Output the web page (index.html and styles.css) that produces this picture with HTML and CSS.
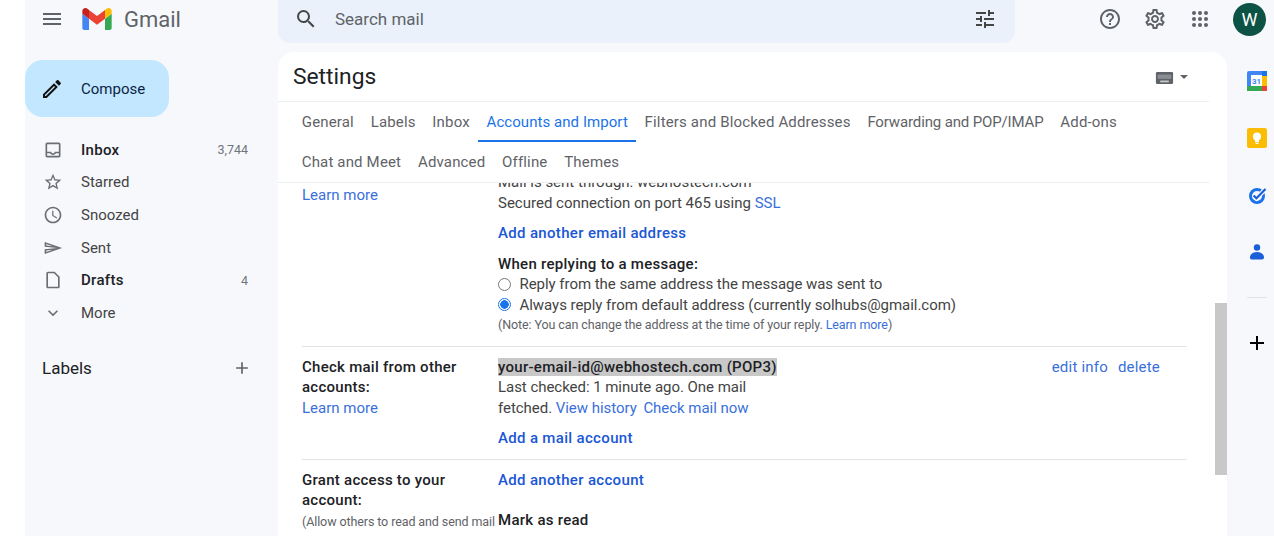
FILE: index.html
```html
<!DOCTYPE html>
<html lang="en">
<head>
  <meta charset="UTF-8" />
  <title>Settings - Gmail</title>
  <link rel="stylesheet" href="styles.css">
</head>
<body>

  <div class="app">
    <div class="gutter"></div>

    <!-- left column -->
    <aside class="sidebar">
      <div class="brand">
        <svg class="icon menu-icon" viewBox="0 0 24 24"><path d="M3 18h18v-2H3v2zm0-5h18v-2H3v2zm0-7v2h18V6H3z"/></svg>
        <svg class="logo" viewBox="52 42 88 66">
          <path fill="#4285f4" d="M58 108h14V74L52 59v43c0 3.32 2.69 6 6 6"/>
          <path fill="#34a853" d="M120 108h14c3.32 0 6-2.69 6-6V59l-20 15"/>
          <path fill="#fbbc04" d="M120 48v26l20-15v-8c0-7.42-8.47-11.65-14.4-7.2"/>
          <path fill="#ea4335" d="M72 74V48l24 18 24-18v26L96 92"/>
          <path fill="#c5221f" d="M52 51v8l20 15V48l-5.6-4.2c-5.94-4.45-14.4-.22-14.4 7.2"/>
        </svg>
        <span class="brand-name">Gmail</span>
      </div>

      <button class="compose">
        <svg class="icon" viewBox="0 0 24 24"><path d="M14.06 9.02l.92.92L5.92 19H5v-.92l9.06-9.06M17.66 3c-.25 0-.51.1-.7.29l-1.83 1.83 3.75 3.75 1.83-1.83c.39-.39.39-1.02 0-1.41l-2.34-2.34c-.2-.2-.45-.29-.71-.29zm-3.6 3.19L3 17.25V21h3.75L17.81 9.94l-3.75-3.75z"/></svg>
        <span>Compose</span>
      </button>

      <nav class="nav">
        <a class="nav-item bold">
          <svg class="icon" viewBox="0 0 24 24"><path d="M19 3H5c-1.1 0-2 .9-2 2v14c0 1.1.9 2 2 2h14c1.1 0 2-.9 2-2V5c0-1.1-.9-2-2-2zm0 16H5v-3h3.56c.69 1.19 1.97 2 3.45 2s2.75-.81 3.45-2H19v3zm0-5h-4.99c0 1.1-.9 2-2 2s-2-.9-2-2H5V5h14v9z"/></svg>
          <span class="nav-label">Inbox</span><span class="count">3,744</span>
        </a>
        <a class="nav-item">
          <svg class="icon" viewBox="0 0 24 24"><path d="M22 9.24l-7.19-.62L12 2 9.19 8.63 2 9.24l5.46 4.73L5.82 21 12 17.27 18.18 21l-1.63-7.03L22 9.24zM12 15.4l-3.76 2.27 1-4.28-3.32-2.88 4.38-.38L12 6.1l1.71 4.04 4.38.38-3.32 2.88 1 4.28L12 15.4z"/></svg>
          <span class="nav-label">Starred</span>
        </a>
        <a class="nav-item">
          <svg class="icon" viewBox="0 0 24 24"><path d="M11.99 2C6.47 2 2 6.48 2 12s4.47 10 9.99 10C17.52 22 22 17.52 22 12S17.52 2 11.99 2zM12 20c-4.42 0-8-3.58-8-8s3.58-8 8-8 8 3.58 8 8-3.58 8-8 8zm.5-13H11v6l5.25 3.15.75-1.23-4.5-2.67z"/></svg>
          <span class="nav-label">Snoozed</span>
        </a>
        <a class="nav-item">
          <svg class="icon" viewBox="0 0 24 24"><path transform="translate(0 2.4) scale(1 .8)" d="M4.01 6.03l7.51 3.22-7.52-1 .01-2.22m7.5 8.72L4 17.97v-2.22l7.51-1M2.01 3L2 10l15 2-15 2 .01 7L23 12 2.01 3z"/></svg>
          <span class="nav-label">Sent</span>
        </a>
        <a class="nav-item bold">
          <svg class="icon" viewBox="0 0 24 24"><path d="M6 2c-1.1 0-2 .9-2 2v16c0 1.1.9 2 2 2h12c1.1 0 2-.9 2-2V8l-6-6H6zm0 18V4h7.17L18 8.83V20H6z"/></svg>
          <span class="nav-label">Drafts</span><span class="count">4</span>
        </a>
        <a class="nav-item">
          <svg class="icon" viewBox="0 0 24 24"><path d="M16.59 8.59L12 13.17 7.41 8.59 6 10l6 6 6-6z"/></svg>
          <span class="nav-label">More</span>
        </a>
      </nav>

      <div class="labels-head">
        <span>Labels</span>
        <svg class="icon" viewBox="0 0 24 24"><path d="M19 13h-6v6h-2v-6H5v-2h6V5h2v6h6v2z"/></svg>
      </div>
    </aside>

    <!-- middle column -->
    <div class="center">
      <div class="search">
        <svg class="icon" viewBox="0 0 24 24"><path d="M15.5 14h-.79l-.28-.27A6.471 6.471 0 0 0 16 9.5 6.5 6.5 0 1 0 9.5 16c1.61 0 3.09-.59 4.23-1.57l.27.28v.79l5 4.99L20.49 19l-4.99-5zm-6 0C7.01 14 5 11.99 5 9.5S7.01 5 9.5 5 14 7.01 14 9.5 11.99 14 9.5 14z"/></svg>
        <span class="search-text">Search mail</span>
        <svg class="icon" viewBox="0 0 24 24"><path d="M3 17v2h6v-2H3zM3 5v2h10V5H3zm10 16v-2h8v-2h-8v-2h-2v6h2zM7 9v2H3v2h4v2h2V9H7zm14 4v-2H11v2h10zm-6-4h2V7h4V5h-4V3h-2v6z"/></svg>
      </div>

      <main class="card">
        <div class="card-head">
          <h1>Settings</h1>
          <div class="input-tools">
            <svg class="keyboard" viewBox="0 0 20 14"><rect width="20" height="14" rx="1.5" fill="#5f6368"/><rect x="2" y="3" width="16" height="5" fill="#8a8d91"/><rect x="5" y="10" width="10" height="2" fill="#c9cbce"/></svg>
            <span class="caret"></span>
          </div>
        </div>

        <div class="tabs">
          <div class="tab-row">
            <a class="tab">General</a>
            <a class="tab">Labels</a>
            <a class="tab">Inbox</a>
            <a class="tab active">Accounts and Import</a>
            <a class="tab">Filters and Blocked Addresses</a>
            <a class="tab tight">Forwarding and POP/IMAP</a>
            <a class="tab">Add-ons</a>
          </div>
          <div class="tab-row">
            <a class="tab">Chat and Meet</a>
            <a class="tab">Advanced</a>
            <a class="tab">Offline</a>
            <a class="tab">Themes</a>
          </div>
        </div>

        <div class="pane">
          <div class="pane-inner">
            <section class="row">
              <div class="row-label first-label">
                <a class="link">Learn more</a>
              </div>
              <div class="row-body">
                <p>Mail is sent through: webhostech.com</p>
                <p>Secured connection on port 465 using <a class="link">SSL</a></p>
                <p class="action"><a class="link-strong">Add another email address</a></p>
                <p class="action"><b>When replying to a message:</b></p>
                <label class="radio-line"><span class="radio"></span>Reply from the same address the message was sent to</label>
                <label class="radio-line"><span class="radio checked"></span>Always reply from default address (currently solhubs@gmail.com)</label>
                <p class="note">(Note: You can change the address at the time of your reply. <a class="link">Learn more</a>)</p>
              </div>
            </section>

            <section class="row">
              <div class="row-label">
                <b>Check mail from other accounts:</b><br>
                <a class="link">Learn more</a>
              </div>
              <div class="row-body account">
                <div class="account-info">
                  <b class="selected">your-email-id@webhostech.com (POP3)</b>
                  <p class="narrow">Last checked: 1 minute ago. One mail fetched. <a class="link">View history</a> <a class="link check-now">Check mail now</a></p>
                  <p class="action"><a class="link-strong">Add a mail account</a></p>
                </div>
                <div class="account-actions">
                  <a class="link">edit info</a>
                  <a class="link">delete</a>
                </div>
              </div>
            </section>

            <section class="row">
              <div class="row-label">
                <b>Grant access to your account:</b><br>
                <span class="note">(Allow others to read and send mail on your behalf)</span>
              </div>
              <div class="row-body">
                <p><a class="link-strong">Add another account</a></p>
                <p class="mark-read"><b>Mark as read</b></p>
                <p class="mark-desc">Mark conversation as read when opened by others</p>
              </div>
            </section>
          </div>
          <div class="scroll-thumb"></div>
        </div>
      </main>
    </div>

    <!-- right column -->
    <div class="right">
      <div class="top-icons">
        <svg class="icon" viewBox="0 0 24 24"><path d="M11 18h2v-2h-2v2zm1-16C6.48 2 2 6.48 2 12s4.48 10 10 10 10-4.48 10-10S17.52 2 12 2zm0 18c-4.41 0-8-3.59-8-8s3.59-8 8-8 8 3.59 8 8-3.59 8-8 8zm0-14c-2.21 0-4 1.79-4 4h2c0-1.1.9-2 2-2s2 .9 2 2c0 2-3 1.75-3 5h2c0-2.25 3-2.5 3-5 0-2.21-1.79-4-4-4z"/></svg>
        <svg class="icon" viewBox="0 0 24 24"><path d="M19.43 12.98c.04-.32.07-.64.07-.98 0-.34-.03-.66-.07-.98l2.11-1.65c.19-.15.24-.42.12-.64l-2-3.46c-.09-.16-.26-.25-.44-.25-.06 0-.12.01-.17.03l-2.49 1c-.52-.4-1.08-.73-1.69-.98l-.38-2.65C14.46 2.18 14.25 2 14 2h-4c-.25 0-.46.18-.49.42l-.38 2.65c-.61.25-1.17.59-1.69.98l-2.49-1c-.06-.02-.12-.03-.18-.03-.17 0-.34.09-.43.25l-2 3.46c-.13.22-.07.49.12.64l2.11 1.65c-.04.32-.07.65-.07.98 0 .33.03.66.07.98l-2.11 1.65c-.19.15-.24.42-.12.64l2 3.46c.09.16.26.25.44.25.06 0 .12-.01.17-.03l2.49-1c.52.4 1.08.73 1.69.98l.38 2.65c.03.24.24.42.49.42h4c.25 0 .46-.18.49-.42l.38-2.65c.61-.25 1.17-.59 1.69-.98l2.49 1c.06.02.12.03.18.03.17 0 .34-.09.43-.25l2-3.46c.12-.22.07-.49-.12-.64l-2.11-1.65zm-1.98-1.71c.04.31.05.52.05.73 0 .21-.02.43-.05.73l-.14 1.13.89.7 1.08.84-.7 1.21-1.27-.51-1.04-.42-.9.68c-.43.32-.84.56-1.25.73l-1.06.43-.16 1.13-.2 1.35h-1.4l-.19-1.35-.16-1.13-1.06-.43c-.43-.18-.83-.41-1.23-.71l-.91-.7-1.06.43-1.27.51-.7-1.21 1.08-.84.89-.7-.14-1.13c-.03-.31-.05-.54-.05-.74s.02-.43.05-.73l.14-1.13-.89-.7-1.08-.84.7-1.21 1.27.51 1.04.42.9-.68c.43-.32.84-.56 1.25-.73l1.06-.43.16-1.13.2-1.35h1.39l.19 1.35.16 1.13 1.06.43c.43.18.83.41 1.23.71l.91.7 1.06-.43 1.27-.51.7 1.21-1.07.85-.89.7.14 1.13zM12 8c-2.21 0-4 1.79-4 4s1.79 4 4 4 4-1.79 4-4-1.79-4-4-4zm0 6c-1.1 0-2-.9-2-2s.9-2 2-2 2 .9 2 2-.9 2-2 2z"/></svg>
        <svg class="icon" viewBox="0 0 24 24">
          <circle cx="6" cy="6" r="2"/><circle cx="12" cy="6" r="2"/><circle cx="18" cy="6" r="2"/>
          <circle cx="6" cy="12" r="2"/><circle cx="12" cy="12" r="2"/><circle cx="18" cy="12" r="2"/>
          <circle cx="6" cy="18" r="2"/><circle cx="12" cy="18" r="2"/><circle cx="18" cy="18" r="2"/>
        </svg>
        <div class="avatar">W</div>
      </div>

      <div class="rail">
        <svg class="rail-app" viewBox="0 0 20 20">
          <rect width="20" height="20" rx="2" fill="#4285f4"/>
          <rect x="15" y="15" width="5" height="5" fill="#ea4335"/>
          <rect y="15" width="15" height="5" fill="#34a853"/>
          <rect x="15" y="5" width="5" height="10" fill="#fbbc04"/>
          <rect x="15" width="5" height="5" fill="#1a73e8"/>
          <rect x="4" y="4" width="11" height="11" fill="#fff"/>
          <text x="9.5" y="13" class="cal-num">31</text>
        </svg>
        <svg class="rail-app" viewBox="0 0 20 20">
          <rect width="20" height="20" rx="2" fill="#fbbc04"/>
          <circle cx="10" cy="8.5" r="4" fill="#fff"/>
          <rect x="8" y="12" width="4" height="2" fill="#fff"/>
          <rect x="8.5" y="14.7" width="3" height="1.3" fill="#fff"/>
        </svg>
        <svg class="rail-app" viewBox="0 0 20 20">
          <circle cx="10" cy="11" r="6.5" fill="none" stroke="#1a73e8" stroke-width="3"/>
          <path d="M6.6 10.5l2.8 2.8L18.5 4" fill="none" stroke="#f6f8fc" stroke-width="4.5"/>
          <path d="M6.6 10.5l2.8 2.8L18.5 4" fill="none" stroke="#1a5fd8" stroke-width="2.2"/>
        </svg>
        <svg class="rail-app" viewBox="0 0 20 20">
          <circle cx="10" cy="5.5" r="3.2" fill="#1a5fd8"/>
          <path d="M3 15.5c0-3.6 3.5-5.5 7-5.5s7 1.9 7 5.5c0 1.2-1 2-2 2H4.5C3.5 17.5 3 16.5 3 15.5z" fill="#1a5fd8"/>
        </svg>
        <div class="rail-sep"></div>
        <svg class="rail-plus" viewBox="0 0 24 24"><path d="M19 13h-6v6h-2v-6H5v-2h6V5h2v6h6v2z"/></svg>
      </div>
    </div>
  </div>

</body>
</html>
```

FILE: styles.css
```css
* {
  box-sizing: border-box;
  margin: 0;
  padding: 0;
}

body {
  background: #fff;
  font-family: Roboto, 'Liberation Sans', sans-serif;
  font-size: 15px;
  color: #444;
  height: 536px;
  overflow: hidden;
}

a {
  cursor: pointer;
}

.app {
  display: flex;
  height: 536px;
  background: #f6f8fc;
}

.gutter {
  width: 25px;
  background: #fff;
}

.icon {
  width: 24px;
  height: 24px;
  fill: #5f6368;
  flex: none;
}

/* sidebar */
.sidebar {
  width: 253px;
  flex: none;
}

.brand {
  display: flex;
  align-items: center;
  height: 38px;
  padding-left: 15px;
}

.logo {
  width: 30px;
  height: 22px;
  margin-left: 18px;
}

.brand-name {
  margin-left: 12px;
  font-size: 22px;
  color: #5f6368;
}

.compose {
  display: flex;
  align-items: center;
  width: 144px;
  height: 57px;
  margin-top: 22px;
  padding-left: 15px;
  gap: 17px;
  border: none;
  border-radius: 18px;
  background: #c2e7ff;
  font: inherit;
  color: #0b2545;
  cursor: pointer;
}

.compose .icon {
  fill: #111;
}

.nav {
  margin-top: 16.5px;
}

.nav-item {
  display: flex;
  align-items: center;
  height: 32.6px;
  padding: 0 30px 0 18px;
  gap: 18px;
  color: #444;
}

.nav-item .icon {
  width: 20px;
  height: 20px;
  fill: #6b6e72;
}

.nav-label {
  flex: 1;
}

.nav-item.bold .nav-label {
  font-weight: 500;
  letter-spacing: .3px;
  color: #202124;
}

.count {
  font-size: 12.5px;
  color: #70757a;
}

.labels-head {
  display: flex;
  align-items: center;
  justify-content: space-between;
  margin-top: 29px;
  padding: 0 26px 0 17px;
  font-size: 17px;
  color: #202124;
}

.labels-head .icon {
  width: 20px;
  height: 20px;
}

/* search + card */
.center {
  width: 949px;
  flex: none;
  display: flex;
  flex-direction: column;
}

.search {
  display: flex;
  align-items: center;
  width: 737px;
  height: 43px;
  flex: none;
  padding: 0 18px 5px 16px;
  background: #eaf1fb;
  border-radius: 0 0 12px 12px;
}

.search .icon {
  fill: #444746;
}

.search-text {
  flex: 1;
  margin-left: 17px;
  font-size: 17px;
  color: #5f6368;
}

.card {
  display: flex;
  flex-direction: column;
  flex: 1;
  min-height: 0;
  margin-top: 9px;
  background: #fff;
  border-radius: 16px 16px 0 0;
}

.card-head {
  display: flex;
  align-items: center;
  justify-content: space-between;
  height: 50px;
  flex: none;
  margin-right: 18px;
  padding: 0 21px 0 15px;
  border-bottom: 1px solid #eceff1;
}

h1 {
  font-size: 22.8px;
  font-weight: 400;
  color: #202124;
}

.input-tools {
  display: flex;
  align-items: center;
  gap: 6px;
  margin-top: 3px;
}

.keyboard {
  width: 19px;
  height: 12px;
}

.caret {
  width: 0;
  height: 0;
  margin-bottom: 3px;
  border-left: 4px solid transparent;
  border-right: 4px solid transparent;
  border-top: 4px solid #5f6368;
}

.tabs {
  flex: none;
  margin-right: 18px;
  padding-left: 15.5px;
  border-bottom: 1px solid #eceff1;
}

.tab-row {
  display: flex;
  height: 40px;
}

.tab {
  display: flex;
  align-items: center;
  padding: 0 8.5px 1px 8.25px;
  color: #5f6368;
  letter-spacing: .16px;
}

.tab.tight {
  letter-spacing: -.14px;
}

.tab.active {
  color: #1a73e8;
  letter-spacing: .06px;
  box-shadow: inset 0 -2px 0 #1a73e8;
}

.pane {
  position: relative;
  flex: 1;
  min-height: 0;
  overflow: hidden;
}

.pane-inner {
  margin-top: -21px;
  margin-right: 40px;
  padding-left: 24px;
}

.row {
  display: flex;
  padding: 10px 0;
  border-bottom: 1px solid #e2e3e5;
  line-height: 20.5px;
}

.row:last-child {
  border-bottom: none;
}

.row-label {
  width: 196px;
  flex: none;
}

.first-label {
  padding-top: 13px;
}

.row-label b,
.row-body b {
  color: #202124;
  font-weight: 500;
  letter-spacing: .27px;
}

.row-body {
  flex: 1;
}

.link {
  color: #3a6fdb;
}

.link-strong {
  color: #1a57d6;
  font-weight: 500;
  letter-spacing: .33px;
}

.action {
  margin-top: 10px;
}

.radio-line {
  display: flex;
  align-items: center;
  letter-spacing: -.04px;
}

.radio {
  width: 13px;
  height: 13px;
  margin-right: 8.5px;
  border: 1px solid #767676;
  border-radius: 50%;
  background: #fff;
}

.radio.checked {
  border: 1.5px solid #1a73e8;
  background: radial-gradient(circle, #1a73e8 4px, #fff 4.5px);
}

.note {
  font-size: 12.5px;
  color: #5f6368;
  letter-spacing: -.1px;
}

.account {
  display: flex;
  justify-content: space-between;
}

.selected {
  background: #c8c8c8;
}

.narrow {
  width: 268px;
  letter-spacing: -.04px;
}

.check-now {
  margin-left: 3px;
}

.account-actions {
  display: flex;
  gap: 10px;
  margin-right: 27px;
  letter-spacing: .2px;
}

.mark-read {
  margin-top: 20px;
}

.mark-desc {
  margin-top: 1px;
}

.scroll-thumb {
  position: absolute;
  top: 120px;
  right: 0;
  width: 12px;
  height: 172px;
  background: #c8c8c8;
}

/* right column */
.right {
  flex: 1;
}

.top-icons {
  display: flex;
  align-items: center;
  gap: 21px;
  height: 38px;
  margin-left: -129px;
}

.avatar {
  width: 33px;
  height: 33px;
  border-radius: 50%;
  background: #0d5345;
  color: #fff;
  font-size: 18px;
  font-weight: 400;
  text-align: center;
  line-height: 33px;
}

.rail {
  display: flex;
  flex-direction: column;
  align-items: center;
  padding: 33px 1px 0 13px;
}

.rail-app {
  width: 20px;
  height: 20px;
  margin-bottom: 37px;
}

.cal-num {
  font-family: Roboto, sans-serif;
  font-size: 8px;
  font-weight: 700;
  fill: #4285f4;
  text-anchor: middle;
}

.rail-sep {
  width: 20px;
  height: 1px;
  background: #e2e3e5;
  margin-top: -2px;
}

.rail-plus {
  width: 24px;
  height: 24px;
  margin-top: 33px;
}
```
